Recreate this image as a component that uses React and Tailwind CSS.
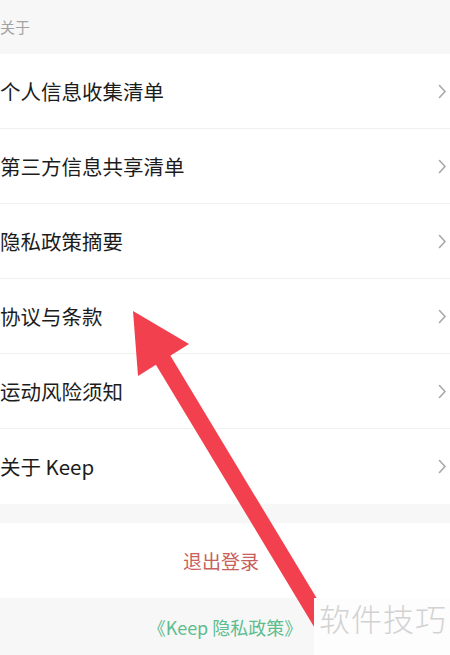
import React from "react";

const items = [
  "个人信息收集清单",
  "第三方信息共享清单",
  "隐私政策摘要",
  "协议与条款",
  "运动风险须知",
  "关于 Keep",
];

function Chevron() {
  return (
    <svg width="9" height="15" viewBox="0 0 9 15" className="shrink-0">
      <path d="M1.5 1.5 L7 7.5 L1.5 13.5" fill="none" stroke="#a8a8a8" strokeWidth="1.6" strokeLinecap="round" strokeLinejoin="round" />
    </svg>
  );
}

export default function App() {
  return (
    <div
      className="relative w-[450px] h-[655px] overflow-hidden bg-[#f7f7f7]"
      style={{ fontFamily: '"Noto Sans CJK SC", "Noto Sans", sans-serif' }}
    >
      <div className="h-[54px] flex items-center text-[15px] text-[#a2a2a2]">关于</div>
      <div className="bg-white">
        {items.map((t, i) => (
          <div
            key={t}
            className={`h-[75px] flex items-center justify-between pr-[3px] ${i < items.length - 1 ? "border-b border-[#f0f0f0]" : ""}`}
          >
            <span className="text-[20.5px] text-[#1c1c1c] leading-none">{t}</span>
            <Chevron />
          </div>
        ))}
      </div>
      <div className="h-[19px]" />
      <div className="h-[75px] bg-white flex items-center justify-center">
        <span className="text-[19px] text-[#c8605b] leading-none mr-[8px]">退出登录</span>
      </div>
      <div className="h-[57px] flex items-center justify-center">
        <span className="text-[18px] text-[#5dbd8e] leading-none">《Keep 隐私政策》</span>
      </div>

      <svg className="absolute inset-0 pointer-events-none" width="450" height="655" viewBox="0 0 450 655">
        <line x1="160" y1="355" x2="335" y2="645" stroke="#f2404f" strokeWidth="17" />
        <polygon points="133,311 189,344 138,376" fill="#f2404f" />
      </svg>

      <div className="absolute left-[314px] top-[598px] w-[136px] h-[57px] bg-[#fdfdfd] flex items-start pt-[4px] pl-[5px]">
        <span className="text-[31px] text-[#d2d2d2] leading-none tracking-[1px] font-light">软件技巧</span>
      </div>
    </div>
  );
}
